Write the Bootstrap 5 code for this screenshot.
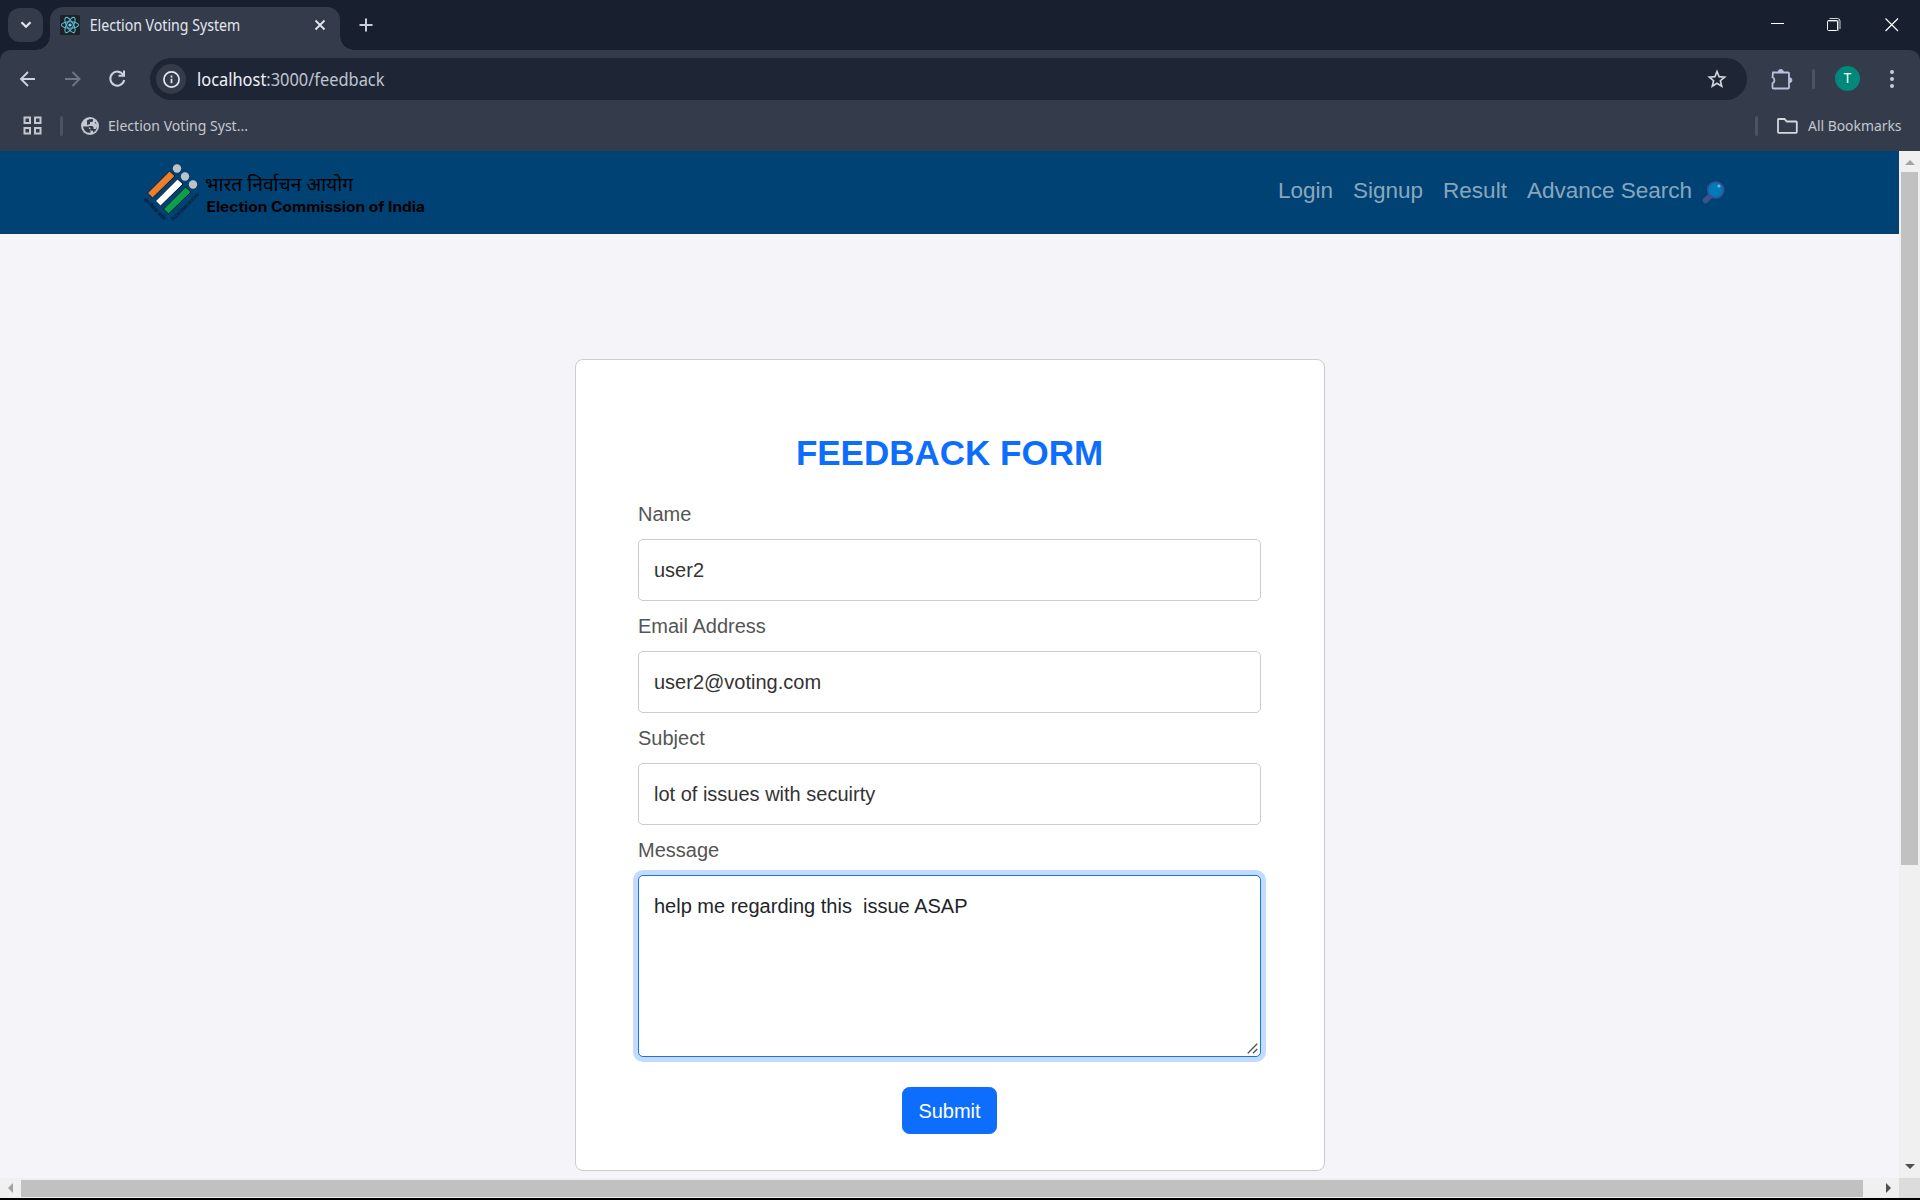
<!DOCTYPE html>
<html lang="en">
<head>
<meta charset="utf-8">
<meta name="viewport" content="width=device-width, initial-scale=1">
<title>Election Voting System</title>
<link href="https://cdn.jsdelivr.net/npm/bootstrap@5.3.0/dist/css/bootstrap.min.css" rel="stylesheet">
<style>
  html, body { height: 100%; overflow: hidden; }
  body { background: #000; font-family: "Liberation Sans", Arial, sans-serif; font-size: 20px; }
  svg { display: block; flex: none; overflow: visible; }
  .app-window { height: 1200px; width: 1920px; padding-bottom: 2px; background: #000; }
  .chrome-ui { font-family: "Noto Sans", "Open Sans", sans-serif; font-size: 15px; background: #182030; color: #e3e6ee; }
  .tab-strip { height: 50px; padding-left: 8px; }
  .tab-search { width: 35px; height: 34px; margin-top: 8px; border-radius: 12px; background: #343b4b; }
  .active-tab { position: relative; margin: 7px 0 0 7px; width: 290px; height: 43px; padding: 0 15px 7px 10px; background: #343b4b; border-radius: 13px 13px 0 0; }
  .active-tab::before, .active-tab::after { content: ""; position: absolute; bottom: 0; width: 14px; height: 14px; }
  .active-tab::before { left: -14px; background: radial-gradient(circle at 0 0, transparent 13.5px, #343b4b 14px); }
  .active-tab::after { right: -14px; background: radial-gradient(circle at 100% 0, transparent 13.5px, #343b4b 14px); }
  .new-tab { margin: 18px 0 0 19px; }
  .win-buttons { padding: 18px 21px 0 0; }
  .toolbar { height: 57px; padding: 0 15px 0 19px; background: #343b4b; border-radius: 10px 10px 0 0; }
  .omnibox { height: 42px; width: 1597px; margin-left: 23px; padding: 0 20px 0 6px; border-radius: 21px; background: #1e2636; margin-top: 1px; }
  .site-info { width: 30px; height: 30px; border-radius: 50%; background: #343b4b; }
  .url { margin-left: 11px; }
  .divider { width: 3px; height: 20px; border-radius: 2px; background: #4b5367; }
  .avatar { width: 25px; height: 25px; border-radius: 50%; background: #00897b; }
  .bookmarks { height: 44px; padding: 0 18px 7px 23px; background: #343b4b; color: #c5c8d0; }
  .page-area { min-height: 0; background: #f4f4f9; }
  .site-nav { height: 83px; background: #004274; padding: 0 174px 0 143px; }
  .site-nav .nav-link { font-size: 22.5px; line-height: 34px; padding: 0 10px 3px; color: rgba(255,255,255,.55); }
  .form-panel { width: 750px; height: 812px; margin: 125px 0 0 575px; padding: 72px 63px 0 62px; background: #fff; border: 1px solid #ccc; border-radius: 8px; }
  .form-panel h1 { font-size: 35px; line-height: 42px; margin-bottom: 25px; }
  .form-label { color: #555; line-height: 30px; margin-bottom: 10px; display: block; }
  .form-control, .form-control:focus { font-size: 20px; line-height: 30px; padding: 15px; border: 1px solid #ccc; border-radius: 5px; color: #333; }
  .field { margin-bottom: 10px; }
  .form-control.message, .form-control.message:focus { height: 182px; resize: none; color: #212529; border-color: #1a73e8; box-shadow: 0 0 0 5px #c2dbfe; }
  .grip { position: absolute; right: 3px; bottom: 3px; }
  .send { font-size: 20px; line-height: 30px; padding: 7.5px 15px; border-radius: 7.5px; }
  .v-scroll { width: 21px; background: #f0f0f0; padding: 9px 0 9px; }
  .v-thumb { width: 17px; height: 693px; margin-top: 7px; background: #c1c1c1; }
  .h-scroll { height: 20px; background: #f0f0f0; }
  .h-thumb { height: 17px; width: 1842px; background: #c1c1c1; margin: 1px 0 0 8px; }
  .scroll-corner { width: 21px; height: 20px; background: #dcdcdc; }
</style>
</head>
<body>
<div class="app-window d-flex flex-column">
  <header class="chrome-ui">
    <div class="tab-strip d-flex align-items-start">
      <div class="tab-search d-flex align-items-center justify-content-center">
        <svg width="12" height="8" viewBox="0 0 12 8" fill="none" stroke="#e3e6ee" stroke-width="2.200"><path d="M1.500 1.300 6 5.800l4.500-4.500"/></svg>
      </div>
      <div class="active-tab d-flex align-items-center">
        <svg width="20" height="20" viewBox="0 0 20 20" fill="none" stroke="#56b9cf" stroke-width="1.100"><rect width="20" height="20" rx="1.500" fill="#202124" stroke="none"/><ellipse cx="10" cy="10" rx="8.600" ry="3.300"/><ellipse cx="10" cy="10" rx="8.600" ry="3.300" transform="rotate(60 10 10)"/><ellipse cx="10" cy="10" rx="8.600" ry="3.300" transform="rotate(120 10 10)"/><circle cx="10" cy="10" r="1.600" fill="#61dafb" stroke="none"/></svg>
        <svg class="ms-2" width="158" height="26"><text x="1.700" y="18.500" font-size="15.500" fill="#e3e6ee" textLength="150.500" lengthAdjust="spacingAndGlyphs">Election Voting System</text></svg>
        <svg class="ms-auto" width="10" height="10" viewBox="0 0 10 10" stroke="#e3e6ee" stroke-width="1.800"><path d="M.5.5l9 9M9.500.5l-9 9"/></svg>
      </div>
      <svg class="new-tab" width="13" height="14" viewBox="0 0 13 14" stroke="#c9cede" stroke-width="2"><path d="M7 .5v13M.500 7h13"/></svg>
      <div class="win-buttons d-flex ms-auto">
        <svg width="14" height="14" viewBox="0 0 14 14"><path d="M0 5.500h13" stroke="#fff"/></svg>
        <svg style="margin-left:42px" width="14" height="14" viewBox="0 0 14 14" fill="none" stroke="#fff"><path d="M2.500.5h8q2.500 0 2.500 2.500v8" stroke-opacity=".8"/><path d="M1 3h10v10" stroke="#8b909a" stroke-width="1.600"/><rect x=".5" y="2.500" width="10" height="10" rx="1"/></svg>
        <svg style="margin-left:44px" width="14" height="14" viewBox="0 0 14 14" stroke="#fff" stroke-width="1.200"><path d="M.5.5l12.500 12.500M13 .5.5 13"/></svg>
      </div>
    </div>
    <div class="toolbar d-flex align-items-center">
      <svg width="17" height="16" viewBox="0 0 17 16" fill="none" stroke="#cdd2e2" stroke-width="1.900"><path d="M16 8H2.500M9 1 2 8l7 7"/></svg>
      <svg style="margin-left:29px" width="17" height="16" viewBox="0 0 17 16" fill="none" stroke="#6f7687" stroke-width="1.900"><path d="M0 8h13.500M7.500 1l7 7-7 7"/></svg>
      <svg style="margin-left:27px" width="17" height="17" viewBox="0 0 17 17" fill="none" stroke="#cdd2e2" stroke-width="2"><path d="M14.200 4.800A7 7 0 1 0 15.200 10"/><path d="M9.500 5.800H15V.5"/></svg>
      <div class="omnibox ms-4 d-flex align-items-center">
        <div class="site-info d-flex align-items-center justify-content-center">
          <svg width="17" height="17" viewBox="0 0 17 17" fill="none" stroke="#e3e6ee" stroke-width="1.700"><circle cx="8.500" cy="8.500" r="7.600"/><path d="M8.500 7.700v4.600M8.500 4.400v2"/></svg>
        </div>
        <svg class="url" width="200" height="26"><text x="0" y="19.500" font-size="17.500" fill="#bfc4cf" textLength="187.500" lengthAdjust="spacingAndGlyphs"><tspan fill="#f0f2f6">localhost</tspan>:3000/feedback</text></svg>
        <svg class="ms-auto" width="20" height="20" viewBox="0 0 20 20" fill="none" stroke="#d0d3dc" stroke-width="1.700"><path d="M10 2.500l2.100 5.200 5.500.4-4.200 3.600 1.300 5.500L10 14.300l-4.700 2.900 1.300-5.500L2.400 8.100l5.500-.4z"/></svg>
      </div>
      <svg style="margin-left:24px" width="22" height="22" viewBox="0 0 22 22"><path d="M2 4.500h15q1 0 1 1v14q0 1-1 1H2.500q-1 0-1-1v-4.200a3.300 3.300 0 0 0 0-6z" fill="none" stroke="#b9c1dc" stroke-width="1.800"/><path d="M7.300 4a2.500 2.500 0 0 1 5 0zM18.500 9.800a2.400 2.400 0 0 1 0 4.800z" fill="#b9c1dc" stroke="#b9c1dc"/></svg>
      <div class="divider" style="margin-left:19px"></div>
      <div class="avatar d-flex" style="margin-left:20px"><svg width="25" height="25"><text x="12.500" y="17.300" text-anchor="middle" font-size="13.500" fill="#fff">T</text></svg></div>
      <svg style="margin-left:29px" width="6" height="20" viewBox="0 0 6 20" fill="#c5cbe0"><circle cx="3" cy="3" r="2"/><circle cx="3" cy="10" r="2"/><circle cx="3" cy="17" r="2"/></svg>
    </div>
    <div class="bookmarks d-flex align-items-center">
      <svg width="19" height="19" viewBox="0 0 19 19" fill="none" stroke="#c5c8d0" stroke-width="2"><path d="M1.500 1.500H7V7H1.500zM12 1.500h5.500V7H12zM1.500 12H7v5.500H1.500zM12 12h5.500v5.500H12z"/></svg>
      <div class="divider" style="margin-left:18px"></div>
      <svg style="margin-left:18px" width="18" height="18" viewBox="0 0 18 18"><circle cx="9" cy="9" r="9" fill="#c5c8d0"/><path d="M2 9.500h4.500q1.500 0 1.500 1.500v1h1.500v3.800Q3 16 2 9.500zM6 5V3.500Q8.500 1.800 12 2.200v1.300q0 1.500-1.500 1.500H9v1.500q0 1-1 1H6.500V9H11q1.500 0 1.500 1.500v1.500h2.300q1.500-2 .9-5L13.500 6l1-1.300Q18.500 12 12 15.500v-1.700h-1.500Q9.500 13 9.500 11.500L6 8z" fill="#343b4b"/></svg>
      <svg style="margin-left:9px" width="150" height="26"><text x="0" y="17.500" font-size="15" fill="#c5c8d0" textLength="140" lengthAdjust="spacingAndGlyphs">Election Voting Syst...</text></svg>
      <div class="divider ms-auto"></div>
      <svg style="margin-left:19px" width="21" height="16" viewBox="0 0 21 16" fill="none" stroke="#d5d8e0" stroke-width="1.800"><path d="M1.500 1h6l2.300 2.500H19q.8 0 .8.800V14q0 .8-.8.800H1.800Q1 14.800 1 14V1.800Q1 1 1.500 1z"/></svg>
      <svg style="margin:0 -4px 0 10px" width="98" height="26"><text x="0" y="17.500" font-size="15" fill="#c5c8d0" textLength="93.500" lengthAdjust="spacingAndGlyphs">All Bookmarks</text></svg>
    </div>
  </header>

  <div class="page-area d-flex flex-grow-1">
    <main class="flex-grow-1 overflow-hidden">
      <nav class="site-nav navbar d-flex align-items-center justify-content-between">
        <a class="p-0 m-0" href="#" aria-label="Election Commission of India">
          <svg width="290" height="66" viewBox="143 160 290 66">
            <g fill="#c0c3c6"><circle cx="177" cy="168.500" r="4.200"/><circle cx="185" cy="176.500" r="4.200"/><circle cx="193" cy="184.500" r="4.200"/></g>
            <g stroke="#06182a" stroke-width="1">
              <path d="M169.500 171l5.500 5-22.500 22-5-5z" fill="#ec7f2c"/>
              <path d="M177.500 179l5.500 5-22.500 22-5-5z" fill="#fff"/>
              <path d="M185.500 187l5.500 5-22.500 22-5-5z" fill="#0a9f4c"/>
            </g>
            <g fill="#04182c" font-size="5.500" font-weight="700" font-family="'Noto Sans', 'Liberation Sans', sans-serif">
              <text transform="translate(143 200) rotate(45)" textLength="29" lengthAdjust="spacingAndGlyphs">भारत निर्वाचन आयोग</text>
              <text transform="translate(173.500 221) rotate(-45)" textLength="37" lengthAdjust="spacingAndGlyphs">Election Commission of India</text>
            </g>
            <text x="205" y="190.500" font-size="19.500" fill="#000" font-family="'Noto Sans Devanagari','Noto Sans',sans-serif" textLength="148" lengthAdjust="spacingAndGlyphs">भारत निर्वाचन आयोग</text>
            <text x="206.500" y="212.200" font-size="14.500" font-weight="700" fill="#000" font-family="Inter, sans-serif" textLength="218.500" lengthAdjust="spacingAndGlyphs">Election Commission of India</text>
          </svg>
        </a>
        <div class="d-flex align-items-center">
          <a class="nav-link" href="#">Login</a>
          <a class="nav-link" href="#">Signup</a>
          <a class="nav-link" href="#">Result</a>
          <a class="nav-link pe-0" href="#">Advance Search</a>
          <svg style="margin-left:10px" width="23" height="23" viewBox="0 0 23 23"><path d="M3.500 19.500l5-5" stroke="#414f8a" stroke-width="5.500" stroke-linecap="round"/><circle cx="13.700" cy="9" r="8" fill="#0079bd" stroke="#37508e" stroke-width="1.600"/><circle cx="17" cy="5" r="1.600" fill="#75b5d8"/></svg>
        </div>
      </nav>
      <form class="form-panel">
        <h1 class="fw-bold text-center text-primary">FEEDBACK FORM</h1>
        <div class="field"><label class="form-label" for="name">Name</label><input class="form-control" id="name" value="user2"></div>
        <div class="field"><label class="form-label" for="email">Email Address</label><input class="form-control" id="email" value="user2@voting.com"></div>
        <div class="field"><label class="form-label" for="subject">Subject</label><input class="form-control" id="subject" value="lot of issues with secuirty"></div>
        <label class="form-label" for="message">Message</label>
        <div class="position-relative">
          <textarea class="form-control message" id="message" spellcheck="false">help me regarding this  issue ASAP</textarea>
          <svg class="grip" width="11" height="11" viewBox="0 0 11 11" stroke="#555" stroke-width="1.400"><path d="M.8 10.200l9.400-9.400M6 10.200l4.200-4.200"/></svg>
        </div>
        <div class="d-flex justify-content-center" style="margin-top:30px"><button type="button" class="btn btn-primary send">Submit</button></div>
      </form>
    </main>
    <div class="v-scroll d-flex flex-column align-items-center">
      <svg width="10" height="5" viewBox="0 0 10 5"><path d="M0 5 5 0l5 5z" fill="#a3a3a3"/></svg>
      <div class="v-thumb"></div>
      <svg class="mt-auto" width="10" height="5" viewBox="0 0 10 5"><path d="M0 0l5 5 5-5z" fill="#505050"/></svg>
    </div>
  </div>
  <div class="h-scroll d-flex align-items-center">
    <svg style="margin-left:8px" width="5" height="10" viewBox="0 0 5 10"><path d="M5 0 0 5l5 5z" fill="#a3a3a3"/></svg>
    <div class="h-thumb"></div>
    <svg style="margin-left:23px" width="5" height="10" viewBox="0 0 5 10"><path d="M0 0l5 5-5 5z" fill="#505050"/></svg>
    <div class="scroll-corner ms-auto"></div>
  </div>
</div>
<script src="https://cdn.jsdelivr.net/npm/bootstrap@5.3.0/dist/js/bootstrap.bundle.min.js"></script>
</body>
</html>
